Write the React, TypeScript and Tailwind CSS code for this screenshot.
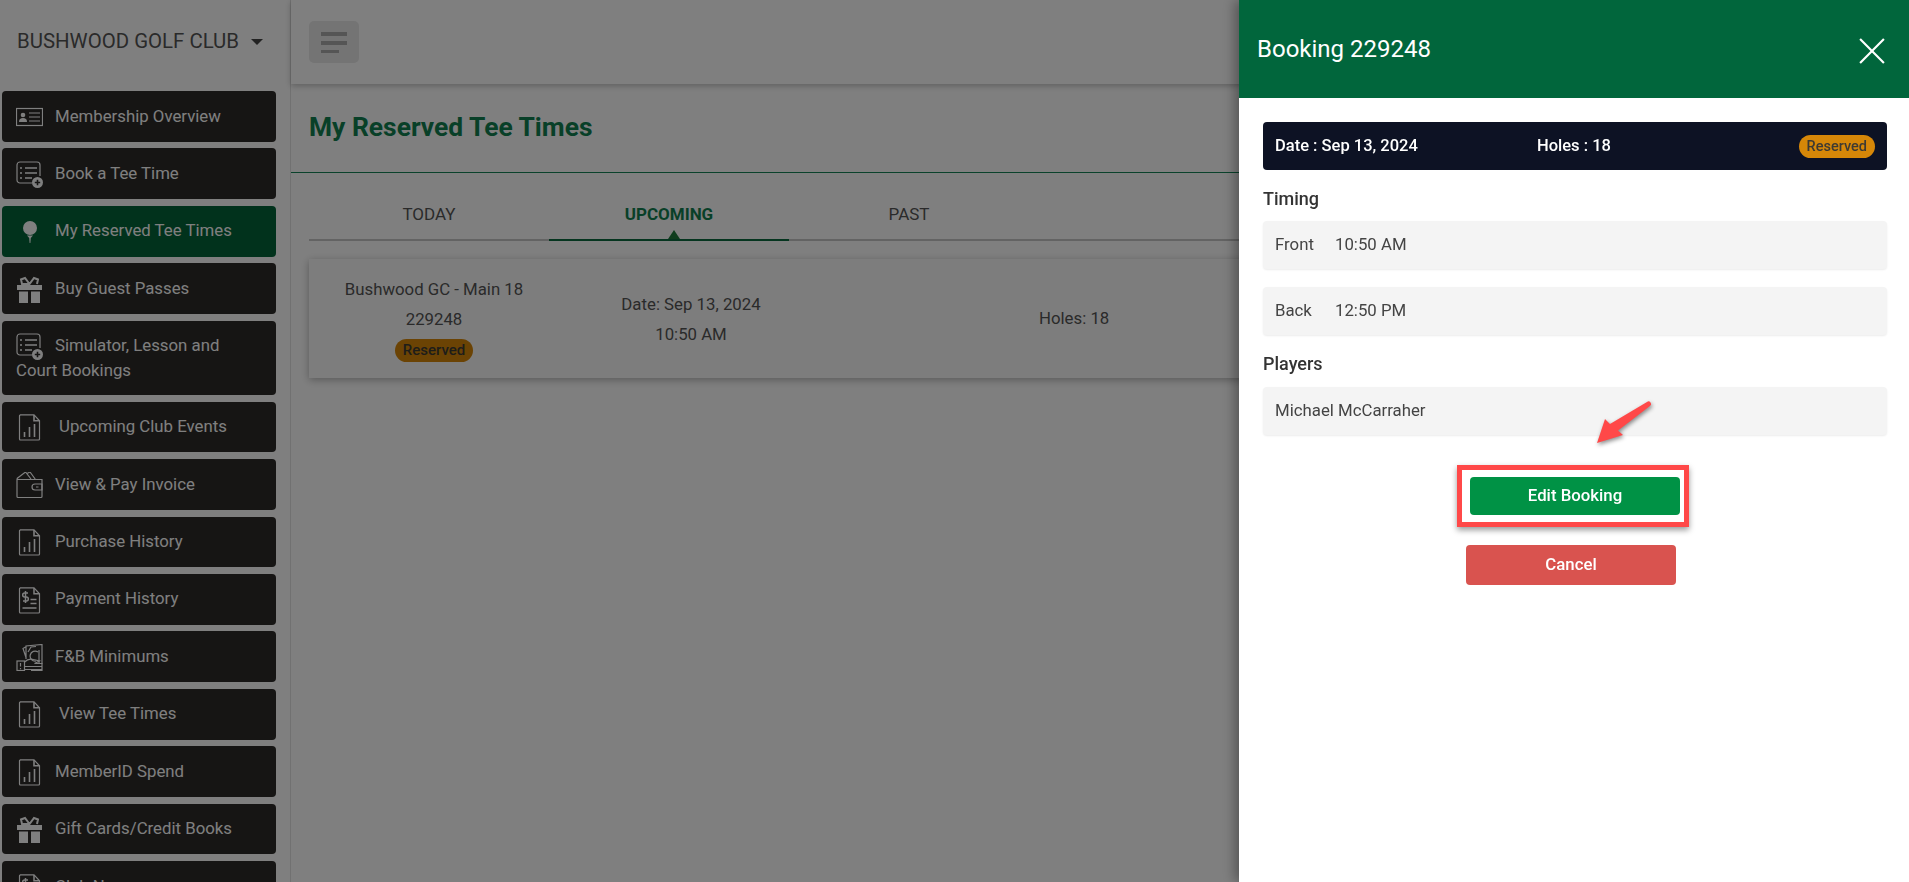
import type { ReactNode } from 'react';

type IconName = 'card' | 'list' | 'tee' | 'gift' | 'chart' | 'wallet' | 'pay' | 'cash';

const iconPaths: Record<IconName, ReactNode> = {
  card: (
    <>
      <rect x="0.5" y="4.5" width="26" height="17" />
      <circle cx="7" cy="11" r="2.3" fill="currentColor" stroke="none" />
      <path d="M3 18c0-3 1.500-4 4-4s4 1 4 4z" fill="currentColor" stroke="none" />
      <path d="M13 9h11M13 13h11M13 17h11" />
    </>
  ),
  list: (
    <>
      <path d="M16 22H4a3 3 0 0 1-3-3V4a3 3 0 0 1 3-3h17a3 3 0 0 1 3 3v11" />
      <path d="M9 7h12M9 12h12M9 17h7M4 7h2M4 12h2M4 17h2" strokeWidth="1.6" />
      <circle cx="21.5" cy="21.5" r="5.5" fill="currentColor" stroke="none" />
      <path d="M21.5 18.8v5.4M18.8 21.5h5.4" stroke="#2c2a28" strokeWidth="1.6" />
    </>
  ),
  tee: (
    <>
      <circle cx="14" cy="10" r="7" fill="currentColor" stroke="none" />
      <path d="M11 17.500h6l-2.200 2.500-.4 5h-.8l-.4-5z" fill="currentColor" stroke="none" />
    </>
  ),
  gift: (
    <>
      <rect x="1" y="9" width="25" height="5" fill="currentColor" stroke="none" />
      <path d="M3 15.5h9V27H3zM15 15.5h9V27h-9z" fill="currentColor" stroke="none" />
      <path d="M13.5 8 9 2 5 3.500 6 8h7.500l4.500-6 4 1.500L21 8" strokeWidth="2" />
    </>
  ),
  chart: (
    <g transform="translate(2.500 0)">
      <path d="M2 .8h13.500L21 6.800V25a1 1 0 0 1-1 1H2a1 1 0 0 1-1-1V2a1 1 0 0 1 1-1z" />
      <path d="M15.500 1v5.800H21M6 23v-5M11 23V13M16 23V10" strokeWidth="1.600" />
    </g>
  ),
  wallet: (
    <>
      <path d="M1 7.500v17a1 1 0 0 0 1 1h23a1 1 0 0 0 1-1V7.500H2a1 1 0 0 1-1-1zM1 6.500 9.500 0l5.500 7M11 1.500 14 0l5.500 7.500" />
      <path d="M26 12h-7a3 3 0 0 0 0 6h7zM20 15h2.500" />
    </>
  ),
  pay: (
    <g transform="translate(2.500 0)">
      <path d="M2 .8h13.500L21 6.800V25a1 1 0 0 1-1 1H2a1 1 0 0 1-1-1V2a1 1 0 0 1 1-1z" />
      <path d="M15.500 1v5.800H21M9.500 6H6.200a1.800 1.800 0 0 0 0 4h1.600a1.800 1.800 0 0 1 0 4H4.500M7 4v12M12 12.500h6M12 16.500h6M4 21h14" strokeWidth="1.500" />
    </g>
  ),
  cash: (
    <>
      <path d="M10 15V2l16-1.500V26.500H15M12 8l3-5 5-.5M23 6v14M22 8a5 5 0 1 0-2 9M9.500 3 7 4.500l3 9" />
      <rect x="1" y="17" width="7.500" height="9.500" />
      <path d="M4.500 19v3.500M4.500 24v1.200" />
      <path d="M8.500 18c3-3 6-3.500 9-2.500l6 1.500-5 2.500h8M8.500 22.500h17.500M8.500 25.500h17.500" />
    </>
  ),
};

function Icon({ name }: { name: IconName }) {
  return (
    <svg
      viewBox="0 0 27 27"
      fill="none"
      stroke="currentColor"
      strokeWidth="1.200"
      className="-my-1 mr-3 inline-block h-[27px] w-[27px] align-middle"
    >
      {iconPaths[name]}
    </svg>
  );
}

const navItems: { label: string; icon: IconName; tall?: boolean; active?: boolean; pad?: boolean }[] = [
  { label: 'Membership Overview', icon: 'card' },
  { label: 'Book a Tee Time', icon: 'list' },
  { label: 'My Reserved Tee Times', icon: 'tee', active: true },
  { label: 'Buy Guest Passes', icon: 'gift' },
  { label: 'Simulator, Lesson and Court Bookings', icon: 'list', tall: true },
  { label: 'Upcoming Club Events', icon: 'chart', pad: true },
  { label: 'View & Pay Invoice', icon: 'wallet' },
  { label: 'Purchase History', icon: 'chart' },
  { label: 'Payment History', icon: 'pay' },
  { label: 'F&B Minimums', icon: 'cash' },
  { label: 'View Tee Times', icon: 'chart', pad: true },
  { label: 'MemberID Spend', icon: 'chart' },
  { label: 'Gift Cards/Credit Books', icon: 'gift' },
  { label: 'Club News', icon: 'pay' },
];

function Sidebar() {
  return (
    <aside className="w-[291px] shrink-0 overflow-hidden border-r border-[#e2e2e2] bg-white">
      <div className="flex h-[84px] items-center pb-[1px] pl-[17px] text-[20.400px] text-[#555]">
        <span>BUSHWOOD GOLF CLUB</span>
        <span className="ml-[12px] mt-[1px] h-0 w-0 border-x-[6px] border-t-[6px] border-x-transparent border-t-[#444]" />
      </div>
      <nav className="mt-[7px] flex flex-col gap-[6.67px] pl-[2px] pr-[14px]">
        {navItems.map((item) => (
          <a
            key={item.label}
            className={`block shrink-0 rounded-[4px] pl-[14px] pr-[30px] pt-[12.500px] text-[16.800px] leading-[25px] text-white ${
              item.tall ? 'h-[74.33px]' : 'h-[50.78px]'
            } ${item.active ? 'bg-[#026438]' : 'bg-[#2c2a28]'}`}
          >
            <Icon name={item.icon} />
            {item.pad ? <span className="ml-[4px]">{item.label}</span> : item.label}
          </a>
        ))}
      </nav>
    </aside>
  );
}

function MainContent() {
  return (
    <main className="flex min-w-0 flex-1 flex-col">
      <header className="flex h-[84px] items-center bg-white pl-[18px] shadow-[0_2px_6px_rgba(0,0,0,0.25)]">
        <button className="flex h-[42px] w-[50px] flex-col items-start justify-center gap-[5px] rounded-[5px] bg-[#e9e9e9] pl-3">
          <span className="h-[4px] w-[26px] bg-[#aaa]" />
          <span className="h-[4px] w-[26px] bg-[#aaa]" />
          <span className="h-[3px] w-[18px] bg-[#aaa]" />
        </button>
      </header>
      <div className="flex h-[89px] items-center border-b border-[#148557] pl-[18px]">
        <h1 className="text-[26.400px] font-bold text-[#118050]">My Reserved Tee Times</h1>
      </div>
      <div className="pl-[18px] pr-5">
        <div className="mt-[22px] flex h-[46px] border-b-2 border-[#c6c6c6] text-[17px] text-[#555]">
          <button className="w-[240px] pb-[4px]">TODAY</button>
          <button className="relative -mb-[2px] w-[240px] border-b-2 border-[#0b6b3f] pb-[4px] font-bold text-[#118050]">
            UPCOMING
            <span className="absolute bottom-0 left-[119px] h-0 w-0 border-x-[6px] border-b-[9px] border-x-transparent border-b-[#1f7a3a]" />
          </button>
          <button className="w-[240px] pb-[4px]">PAST</button>
        </div>
        <section className="mt-[18px] flex h-[119px] items-center bg-[#fbfbfb] text-[16.800px] text-[#555] shadow-[0_2px_8px_rgba(0,0,0,0.3)]">
          <div className="flex w-[250px] flex-col items-center pb-[2px]">
            <p className="leading-[30px]">Bushwood GC - Main 18</p>
            <p className="leading-[30px]">229248</p>
            <span className="mt-[5px] rounded-full bg-[#d68708] px-2 text-[15px] font-medium leading-[23px] text-[#3d3a33]">
              Reserved
            </span>
          </div>
          <div className="ml-[7px] w-[250px] text-center leading-[30px]">
            <p>Date: Sep 13, 2024</p>
            <p>10:50 AM</p>
          </div>
          <div className="ml-[223px] mt-[1px]">Holes: 18</div>
        </section>
      </div>
    </main>
  );
}

function InfoBox({ children }: { children: ReactNode }) {
  return (
    <div className="flex h-[48px] items-center rounded-[4px] bg-[#f4f4f4] pl-3 text-[16.800px] text-[#444] shadow-[0_1px_2px_rgba(0,0,0,0.08)]">
      {children}
    </div>
  );
}

function BookingPanel() {
  return (
    <div className="fixed inset-y-0 right-0 flex w-[670px] flex-col bg-white shadow-[-4px_0_12px_rgba(0,0,0,0.35)]">
      <div className="flex h-[98px] shrink-0 items-center justify-between bg-[#01663c] pl-[18px] pr-[24px]">
        <h2 className="text-[24px] text-white">Booking 229248</h2>
        <svg viewBox="0 0 24 24" className="mt-[4px] h-[26px] w-[26px]" fill="none" stroke="white" strokeWidth="2">
          <path d="M1 1 23 23M23 1 1 23" />
        </svg>
      </div>
      <div className="relative px-[24px] pr-[22px] pt-[24px]">
        <div className="flex h-[48px] items-center rounded-[4px] bg-[#0d1224] pl-3 pr-3 text-[16.500px] font-medium text-white">
          <span className="w-[262px]">Date : Sep 13, 2024</span>
          <span>Holes : 18</span>
          <span className="ml-auto rounded-full bg-[#d68708] px-2 text-[14.500px] font-medium leading-[23px] text-[#3d3a33]">
            Reserved
          </span>
        </div>
        <h3 className="mt-[16px] text-[18px] font-medium leading-[26px] text-[#333]">Timing</h3>
        <div className="mt-[9px]">
          <InfoBox>
            <span className="w-[60px]">Front</span>10:50 AM
          </InfoBox>
        </div>
        <div className="mt-[18px]">
          <InfoBox>
            <span className="w-[60px]">Back</span>12:50 PM
          </InfoBox>
        </div>
        <h3 className="mt-[16px] text-[18px] font-medium leading-[26px] text-[#333]">Players</h3>
        <div className="mt-[10px]">
          <InfoBox>Michael McCarraher</InfoBox>
        </div>
        <div className="mt-[30px] flex flex-col items-center">
          <div className="ml-[-4px] flex h-[62px] w-[232px] items-center justify-center border-[5px] border-[#ff4848] shadow-[0_3px_6px_rgba(0,0,0,0.4)]">
            <button className="ml-[4px] h-[38px] w-[210px] rounded-[4px] bg-[#009245] text-[16.800px] font-medium text-white">
              Edit Booking
            </button>
          </div>
          <button className="ml-[-8px] mt-[18px] h-[40px] w-[210px] rounded-[4px] bg-[#d9534f] text-[16.800px] font-medium text-white">
            Cancel
          </button>
        </div>
        {/* annotation arrow drawn over the panel */}
        <svg viewBox="0 0 56 44" className="absolute left-[356px] top-[303px] h-[44px] w-[56px] drop-shadow-[1px_2px_2px_rgba(0,0,0,0.45)]">
          <path d="M52 1a2.500 2.500 0 0 1 3 4L23 29.500l5 4.500L2 42l8-24 5 5z" fill="#ff4848" />
        </svg>
      </div>
    </div>
  );
}

export default function App() {
  return (
    <div className="flex h-screen overflow-hidden bg-white font-['Roboto',sans-serif]">
      <Sidebar />
      <MainContent />
      <div className="fixed inset-0 bg-black/50" />
      <BookingPanel />
    </div>
  );
}
